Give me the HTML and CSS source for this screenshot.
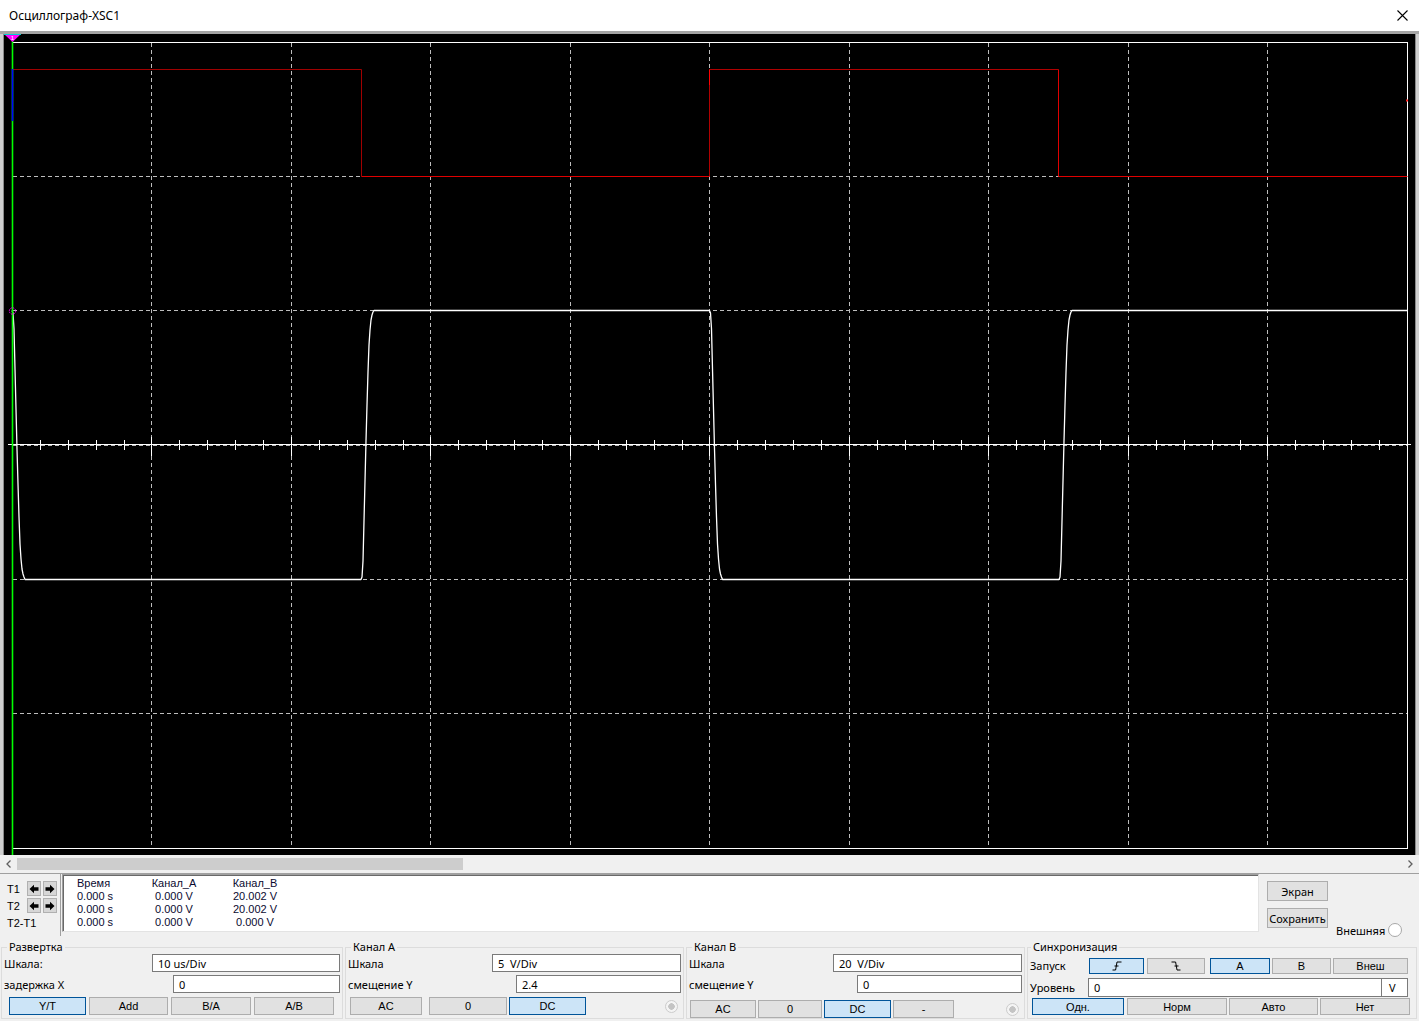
FILE: index.html
```html
<!DOCTYPE html>
<html lang="ru">
<head>
<meta charset="utf-8">
<title>Осциллограф-XSC1</title>
<link rel="stylesheet" href="styles.css">
</head>
<body>
<div class="window">
  <div class="titlebar">
    <span class="title">Осциллограф-XSC1</span>
    <svg class="close" width="11" height="11" viewBox="0 0 11 11"><path d="M0.5 0.5L10.5 10.5M10.5 0.5L0.5 10.5" stroke="#000" stroke-width="1.1" fill="none"/></svg>
  </div>

  <div class="screen-row">
    <div class="edge"></div>
    <svg class="scope" width="1411" height="821" viewBox="4 34 1411 821">
      <rect x="4" y="34" width="1411" height="821" fill="#000"/>
      <g stroke="#bdbdbd" stroke-width="1" stroke-dasharray="4 3" fill="none">
        <path d="M151.5 43V848M291.5 43V848M430.5 43V848M570.5 43V848M709.5 43V848M849.5 43V848M988.5 43V848M1128.5 43V848M1267.5 43V848"/>
        <path d="M13 176.5H1407M13 310.5H1407M13 445.5H1407M13 579.5H1407M13 713.5H1407"/>
      </g>
      <rect x="12.5" y="42.5" width="1395" height="806" fill="none" stroke="#fff" stroke-width="1"/>
      <g stroke="#fff" stroke-width="1" fill="none">
        <path d="M8 444.5H1411"/>
        <path d="M40.5 440V450M68.5 440V450M96.5 440V450M124.5 440V450M179.5 440V450M207.5 440V450M235.5 440V450M263.5 440V450M319.5 440V450M347.5 440V450M375.5 440V450M403.5 440V450M458.5 440V450M486.5 440V450M514.5 440V450M542.5 440V450M598.5 440V450M626.5 440V450M654.5 440V450M682.5 440V450M737.5 440V450M765.5 440V450M793.5 440V450M821.5 440V450M877.5 440V450M905.5 440V450M933.5 440V450M961.5 440V450M1016.5 440V450M1044.5 440V450M1072.5 440V450M1100.5 440V450M1156.5 440V450M1184.5 440V450M1212.5 440V450M1240.5 440V450M1295.5 440V450M1323.5 440V450M1351.5 440V450M1379.5 440V450"/>
        <path d="M151.5 437V456M291.5 437V456M430.5 437V456M570.5 437V456M709.5 437V456M849.5 437V456M988.5 437V456M1128.5 437V456M1267.5 437V456M1407.5 437V456"/>
      </g>
      <path d="M12.5 69.5H361.5V176.5" stroke="#a00000" stroke-width="1" fill="none"/>
      <path d="M361.5 176.5H709.5" stroke="#e00000" stroke-width="1" fill="none"/>
      <path d="M709.5 176.5V69.5H1058.5" stroke="#b00000" stroke-width="1" fill="none"/>
      <path d="M1058.5 69.5V176.5H1407.5" stroke="#e00000" stroke-width="1" fill="none"/>
      <path d="M709.5 69.5V85" stroke="#ff0000" stroke-width="1" fill="none"/>
      <path d="M12 310.5L13 313L14 329L15 369L16 409L17 449L18 484L19 517L20 544L21 559L22 569L23 574L24 577L25 579.5H361L362 577L363 561L364 521L365 481L366 441L367 405L368 372L369 345L370 330L371 320L372 315L373 312L374 310.5H709.5L710.5 313L711.5 329L712.5 369L713.5 409L714.5 449L715.5 484L716.5 517L717.5 544L718.5 559L719.5 569L720.5 574L721.5 577L722.5 579.5H1059L1060 577L1061 561L1062 521L1063 481L1064 441L1065 405L1066 372L1067 345L1068 330L1069 320L1070 315L1071 312L1072 310.5H1407.5" stroke="#fff" stroke-width="1.3" fill="none" stroke-linejoin="round"/>
      <path d="M12.5 34V855" stroke="#00ff00" stroke-width="1.6"/>
      <path d="M12.5 69V121" stroke="#0000ff" stroke-width="1.6"/>
      <circle cx="12.5" cy="311" r="3.2" fill="none" stroke="#ff00ff" stroke-width="1" stroke-dasharray="1.5 1"/>
      <rect x="1406" y="99.5" width="2" height="2" fill="#ff2020"/>
      <polygon points="4,34 21,34 12.5,42" fill="#ff00ff"/>
      <path d="M4 34.5H21" stroke="#00d0d0" stroke-width="1"/>
      <text x="12.5" y="39.5" font-size="6" font-family="Liberation Sans, sans-serif" fill="#fff" text-anchor="middle">1</text>
    </svg>
    <div class="edge"></div>
  </div>

  <div class="hscroll">
    <div class="sarrow"><svg width="5" height="8" viewBox="0 0 5 8"><path d="M4.5 0.5L1 4L4.5 7.5" stroke="#606060" stroke-width="1.3" fill="none"/></svg></div>
    <div class="track"><div class="thumb"></div></div>
    <div class="sarrow"><svg width="5" height="8" viewBox="0 0 5 8"><path d="M0.5 0.5L4 4L0.5 7.5" stroke="#606060" stroke-width="1.3" fill="none"/></svg></div>
  </div>

  <div class="readout-row">
    <div class="cursors">
      <div class="crow">
        <span class="clabel">T1</span>
        <span class="abtn"><svg width="10" height="10" viewBox="0 0 10 10"><path d="M0.5 5L5 0.8V3.3H9.5V6.7H5V9.2Z" fill="#000"/></svg></span>
        <span class="abtn"><svg width="10" height="10" viewBox="0 0 10 10"><path d="M9.5 5L5 0.8V3.3H0.5V6.7H5V9.2Z" fill="#000"/></svg></span>
      </div>
      <div class="crow">
        <span class="clabel">T2</span>
        <span class="abtn"><svg width="10" height="10" viewBox="0 0 10 10"><path d="M0.5 5L5 0.8V3.3H9.5V6.7H5V9.2Z" fill="#000"/></svg></span>
        <span class="abtn"><svg width="10" height="10" viewBox="0 0 10 10"><path d="M9.5 5L5 0.8V3.3H0.5V6.7H5V9.2Z" fill="#000"/></svg></span>
      </div>
      <div class="crow crow-last">
        <span class="clabel">T2-T1</span>
      </div>
    </div>
    <div class="readout">
      <div class="rd-grid">
        <span class="c1">Время</span><span class="c2">Канал_A</span><span class="c3">Канал_B</span>
        <span class="c1">0.000 s</span><span class="c2">0.000 V</span><span class="c3">20.002 V</span>
        <span class="c1">0.000 s</span><span class="c2">0.000 V</span><span class="c3">20.002 V</span>
        <span class="c1">0.000 s</span><span class="c2">0.000 V</span><span class="c3">0.000 V</span>
      </div>
    </div>
    <div class="side">
      <div class="side-btns">
        <div class="wbtn">Экран</div>
        <div class="wbtn">Сохранить</div>
      </div>
      <div class="ext">
        <span>Внешняя</span>
        <span class="radio-white"></span>
      </div>
    </div>
  </div>

  <div class="controls">
    <fieldset class="grp g-sweep">
      <legend>Развертка</legend>
      <div class="frow">
        <span class="flabel">Шкала:</span>
        <div class="field w188">10 us/Div</div>
      </div>
      <div class="frow r2">
        <span class="flabel">задержка X</span>
        <div class="field w167">0</div>
      </div>
      <div class="brow sweep-btns">
        <div class="btn sel" style="width:77px">Y/T</div>
        <div class="btn" style="width:79px">Add</div>
        <div class="btn" style="width:80px">B/A</div>
        <div class="btn" style="width:80px">A/B</div>
      </div>
    </fieldset>

    <fieldset class="grp g-cha">
      <legend>Канал A</legend>
      <div class="frow">
        <span class="flabel">Шкала</span>
        <div class="field w189">5&nbsp; V/Div</div>
      </div>
      <div class="frow r2">
        <span class="flabel">смещение Y</span>
        <div class="field w165">2.4</div>
      </div>
      <div class="brow cha-btns">
        <div class="btn" style="width:72px">AC</div>
        <div class="btn gap7" style="width:78px">0</div>
        <div class="btn sel" style="width:77px">DC</div>
        <span class="radio-dis"></span>
      </div>
    </fieldset>

    <fieldset class="grp g-chb">
      <legend>Канал B</legend>
      <div class="frow">
        <span class="flabel">Шкала</span>
        <div class="field w189">20&nbsp; V/Div</div>
      </div>
      <div class="frow r2">
        <span class="flabel">смещение Y</span>
        <div class="field w165">0</div>
      </div>
      <div class="brow chb-btns">
        <div class="btn" style="width:66px">AC</div>
        <div class="btn" style="width:64px">0</div>
        <div class="btn sel" style="width:67px">DC</div>
        <div class="btn" style="width:61px">-</div>
        <span class="radio-dis"></span>
      </div>
    </fieldset>

    <fieldset class="grp g-trig">
      <legend>Синхронизация</legend>
      <div class="trow t1">
        <span class="tlabel">Запуск</span>
        <div class="btn sel tb" style="width:55px"><svg width="10" height="10" viewBox="0 0 10 10"><path d="M0.5 9H3.6L5 1H9.5M2.5 5H6.5" stroke="#000" stroke-width="1" fill="none"/></svg></div>
        <div class="btn tb" style="width:58px;margin-left:3px"><svg width="10" height="10" viewBox="0 0 10 10"><path d="M0.5 1H4.6L6 9H9.5M3.5 5H7.5" stroke="#000" stroke-width="1" fill="none"/></svg></div>
        <div class="btn sel tb" style="width:60px;margin-left:5px">A</div>
        <div class="btn tb" style="width:59px;margin-left:2px">B</div>
        <div class="btn tb" style="width:75px;margin-left:2px">Внеш</div>
      </div>
      <div class="trow t2">
        <span class="tlabel">Уровень</span>
        <div class="field lvl">0</div>
        <div class="field unit">V</div>
      </div>
      <div class="brow trig-btns">
        <div class="btn sel" style="width:92px">Одн.</div>
        <div class="btn" style="width:100px;margin-left:3px">Норм</div>
        <div class="btn" style="width:89px;margin-left:2px">Авто</div>
        <div class="btn" style="width:90px;margin-left:2px">Нет</div>
      </div>
    </fieldset>
  </div>
</div>
</body>
</html>
```

FILE: styles.css
```css
* { box-sizing: border-box; }

html, body {
  margin: 0;
  padding: 0;
}

body {
  width: 1419px;
  height: 1021px;
  overflow: hidden;
  background: #f0f0f0;
  font-family: "Noto Sans", "Open Sans", sans-serif;
  font-size: 11px;
  color: #000;
}

.window {
  width: 1419px;
  height: 1021px;
  display: flex;
  flex-direction: column;
}

/* title bar */
.titlebar {
  height: 31px;
  flex: none;
  background: #fff;
  display: flex;
  align-items: center;
  justify-content: space-between;
  padding: 0 11px 0 9px;
}

.title {
  font-size: 12px;
  line-height: 16px;
  color: #000;
}

.close { display: block; }

/* scope screen */
.screen-row {
  flex: none;
  height: 824px;
  display: flex;
  border-top: 3px solid #a4a4a4;
}

.edge {
  width: 4px;
  background: #cfcfcf;
  border-right: 1px solid #8a8a8a;
}

.edge:last-child {
  border-right: none;
  border-left: 1px solid #8a8a8a;
}

.scope {
  display: block;
  flex: none;
}

/* horizontal scrollbar */
.hscroll {
  flex: none;
  height: 18px;
  display: flex;
  align-items: center;
  background: #f0f0f0;
}

.sarrow {
  width: 17px;
  height: 18px;
  display: flex;
  align-items: center;
  justify-content: center;
}

.sarrow svg { display: block; }

.track {
  flex: 1;
  height: 12px;
  background: #f0f0f0;
}

.thumb {
  width: 446px;
  height: 12px;
  background: #cdcdcd;
}

/* readout row */
.readout-row {
  flex: none;
  height: 63px;
  display: flex;
  border-top: 1px solid #a0a0a0;
}

.cursors {
  width: 61px;
  border-right: 1px solid #a0a0a0;
  padding-top: 7px;
  font-family: "Liberation Sans", Arial, sans-serif;
  font-size: 11px;
}

.crow {
  display: flex;
  align-items: center;
  height: 15px;
  margin-bottom: 2px;
}

.crow-last {
  height: 14px;
  margin-top: 3px;
}

.clabel {
  width: 27px;
  padding-left: 7px;
  white-space: nowrap;
}

.abtn {
  width: 14px;
  height: 15px;
  margin-right: 2px;
  background: #d6d6d6;
  border: 1px solid #b0b0b0;
  display: flex;
  align-items: center;
  justify-content: center;
}

.abtn svg { display: block; }

.readout {
  width: 1197px;
  height: 58px;
  margin-left: 1px;
  background: #fff;
  border: 1px solid;
  border-color: #a0a0a0 #e3e3e3 #e3e3e3 #a0a0a0;
  box-shadow: inset 1px 1px 0 #696969;
}

.rd-grid {
  display: grid;
  grid-template-columns: 62px 70px 92px;
  padding: 2px 0 0 14px;
  font-family: "Liberation Sans", Arial, sans-serif;
  font-size: 11px;
  line-height: 13px;
  color: #0a0a30;
}

.rd-grid .c1 { text-align: left; }
.rd-grid .c2 { text-align: center; }
.rd-grid .c3 { text-align: center; }

.side {
  display: flex;
  padding-left: 8px;
}

.side-btns {
  display: flex;
  flex-direction: column;
  padding-top: 7px;
  gap: 7px;
}

.wbtn {
  width: 61px;
  height: 20px;
  background: #e1e1e1;
  border: 1px solid #adadad;
  display: flex;
  align-items: center;
  justify-content: center;
  font-size: 11px;
  white-space: nowrap;
}

.ext {
  display: flex;
  align-items: center;
  gap: 3px;
  margin-left: 8px;
  margin-top: 49px;
  height: 14px;
  white-space: nowrap;
}

.radio-white {
  width: 14px;
  height: 14px;
  border-radius: 50%;
  border: 1px solid #a8a8a8;
  background: #fff;
}

/* controls */
.controls {
  flex: none;
  height: 85px;
  display: flex;
  gap: 2px;
  padding: 4px 0 2px 1px;
}

.grp {
  margin: 0;
  padding: 0 1px 0 1px;
  border: 1px solid #dcdcdc;
  min-width: 0;
}

.grp legend {
  font-size: 11px;
  line-height: 14px;
  padding: 0 2px;
  margin-left: 4px;
}

.g-sweep { width: 342px; }
.g-cha { width: 339px; }
.g-chb { width: 339px; }
.g-trig { width: 390px; }

.g-trig legend { margin-left: 2px; }

.frow {
  display: flex;
  align-items: center;
  height: 18px;
}

.frow.r2 { margin-top: 3px; }

.flabel {
  flex: 1;
  padding-left: 1px;
  padding-top: 1px;
  white-space: nowrap;
}

.field {
  height: 18px;
  background: #fff;
  border: 1px solid #7a7a7a;
  padding-left: 5px;
  display: flex;
  align-items: center;
  font-size: 11px;
  white-space: nowrap;
}

.w188 { width: 188px; margin-right: 1px; }
.w167 { width: 167px; margin-right: 1px; }
.w189 { width: 189px; margin-right: 1px; }
.w165 { width: 165px; margin-right: 1px; }

.brow {
  display: flex;
  align-items: center;
  height: 18px;
}

.sweep-btns {
  margin-top: 4px;
  padding-left: 6px;
  gap: 3px;
}

.cha-btns {
  margin-top: 4px;
  padding-left: 3px;
  gap: 2px;
}

.cha-btns .gap7 { margin-left: 5px; }

.chb-btns {
  margin-top: 7px;
  padding-left: 2px;
  gap: 2px;
}

.btn {
  height: 18px;
  background: #e1e1e1;
  border: 1px solid #adadad;
  display: flex;
  align-items: center;
  justify-content: center;
  font-family: "Liberation Sans", Arial, sans-serif;
  font-size: 11px;
  white-space: nowrap;
}

.btn.sel {
  background: #cce4f7;
  border-color: #005499;
}

.btn svg { display: block; }

.radio-dis {
  width: 13px;
  height: 13px;
  margin-left: auto;
  margin-right: 4px;
  border-radius: 50%;
  border: 1px solid #cccccc;
  background: radial-gradient(circle, #c4c4c4 0 3px, #f4f4f4 3.5px);
}

.trow {
  display: flex;
  align-items: center;
}

.trow.t1 {
  margin-top: 4px;
  height: 15px;
}

.trow.t1 .btn { height: 16px; }

.trow.t2 {
  margin-top: 5px;
  height: 19px;
}

.tlabel {
  width: 60px;
  padding-left: 1px;
  white-space: nowrap;
}

.field.lvl {
  width: 294px;
  height: 19px;
  margin-left: -1px;
}

.field.unit {
  width: 27px;
  height: 19px;
  border-left: 1px solid #7a7a7a;
  margin-left: -1px;
  padding-left: 7px;
}

.trig-btns {
  margin-top: 1px;
  height: 17px;
  padding-left: 3px;
}

.trig-btns .btn { height: 17px; }
```
